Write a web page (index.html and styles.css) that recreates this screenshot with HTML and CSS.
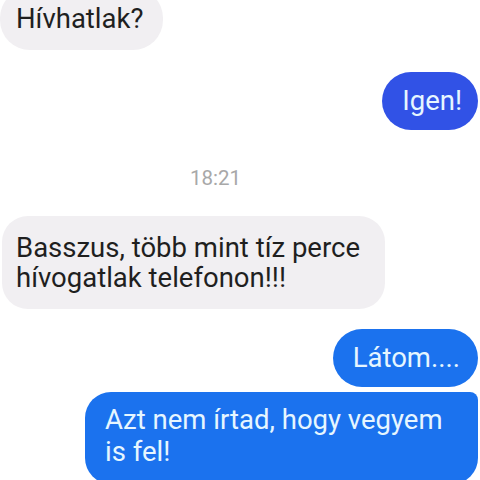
FILE: index.html
```html
<!DOCTYPE html>
<html lang="hu">
<head>
  <meta charset="UTF-8" />
  <title>Üzenetek</title>
  <meta name="viewport" content="width=device-width, initial-scale=1.0"/>
  <link rel="stylesheet" href="styles.css">
</head>
<body>
  <div class="chat">
    <div class="bubble in first">Hívhatlak?</div>
    <div class="bubble out indigo">Igen!</div>
    <div class="time">18:21</div>
    <div class="bubble in wide">Basszus, több mint tíz perce hívogatlak telefonon!!!</div>
    <div class="bubble out">Látom....</div>
    <div class="bubble out last">Azt nem írtad, hogy vegyem is fel!</div>
  </div>
</body>
</html>
```

FILE: styles.css
```css
:root {
  --incoming: #f1eff2;
  --outgoing: #1b72ee;
  --outgoing-alt: #3152e6;
  --text-dark: #1f1f1f;
  --text-light: #e6f6ff;
}

body {
  margin: 0;
  background: #ffffff;
  font-family: Roboto, 'Noto Sans', sans-serif;
  overflow: hidden;
}

.chat {
  display: flex;
  flex-direction: column;
  padding: 0 2px;
}

.bubble {
  font-size: 27.5px;
  line-height: 30px;
  padding: 14px 18px 14px 16px;
  border-radius: 30px;
}

.bubble.in {
  align-self: flex-start;
  background: var(--incoming);
  color: var(--text-dark);
}

.bubble.out {
  align-self: flex-end;
  background: var(--outgoing);
  color: var(--text-light);
  padding-left: 20px;
}

.bubble.first {
  margin-top: -12px;
  margin-left: -2px;
  padding: 16px 20px 16px 16px;
}

.bubble.indigo {
  background: var(--outgoing-alt);
  margin-top: 22px;
  padding-right: 16px;
}

.time {
  align-self: flex-start;
  margin: 36px 0 26px 188px;
  font-size: 20.5px;
  color: #a8a8a8;
}

.bubble.wide {
  max-width: 354px;
  padding: 17px 15px 16px 14px;
  border-radius: 26px;
}

.bubble.out + .bubble.out {
  margin-top: 5px;
}

.bubble.wide + .bubble.out {
  margin-top: 20px;
}

.bubble.last {
  width: 343px;
  line-height: 32px;
  padding: 12px 30px 16px 20px;
  border-radius: 26px 8px 26px 26px;
}
```
